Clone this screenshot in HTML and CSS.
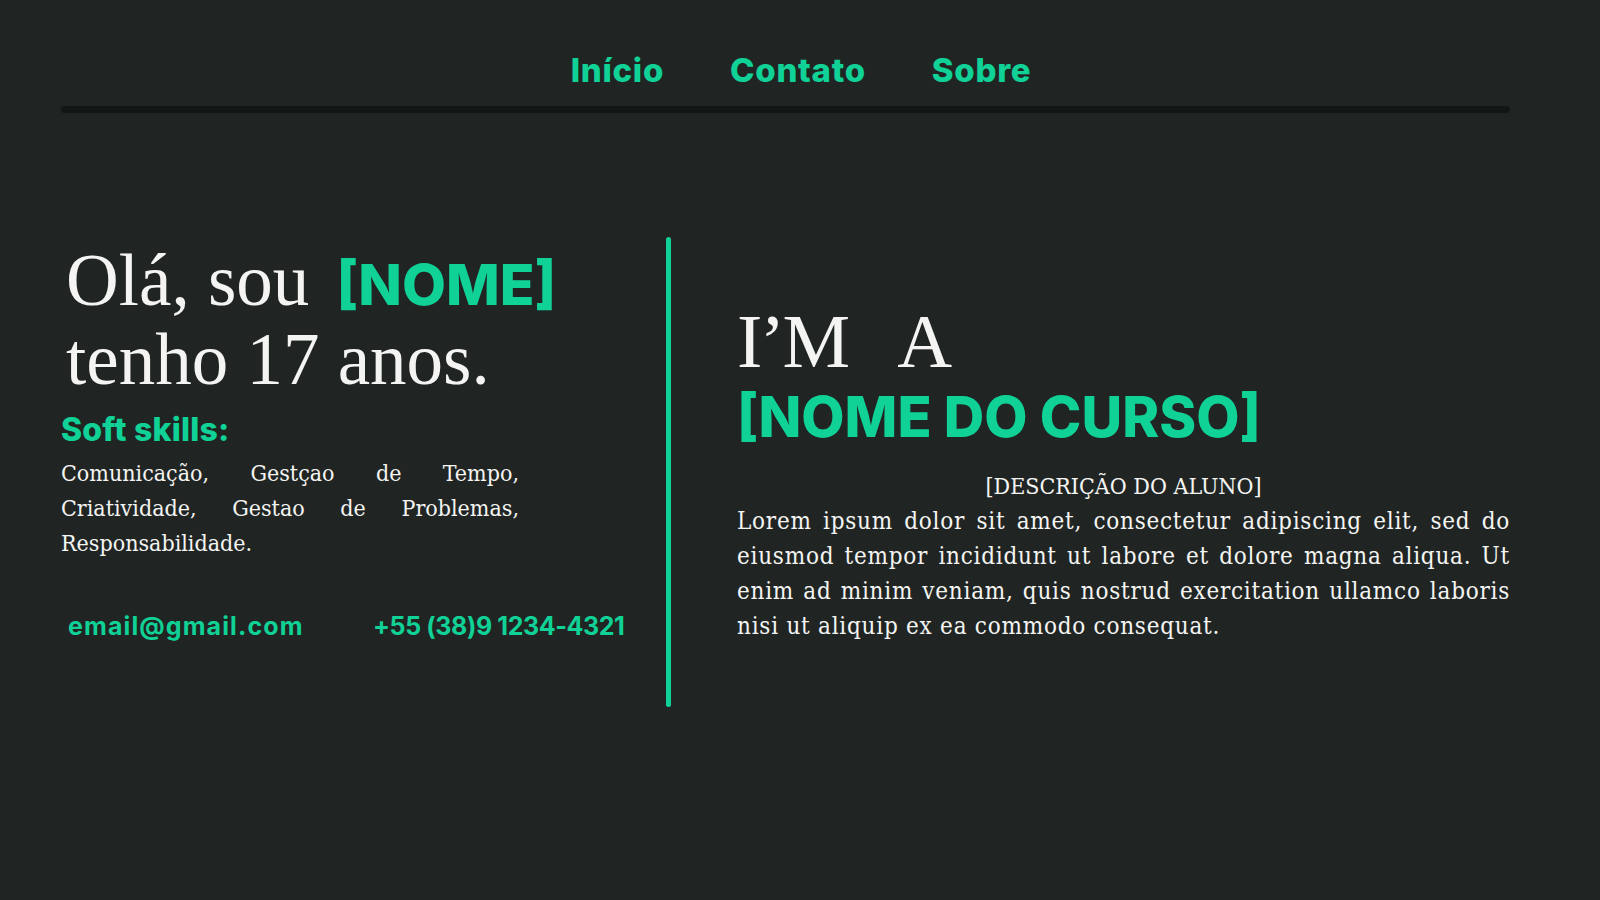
FILE: index.html
```html
<!DOCTYPE html>
<html lang="pt-BR">
<head>
<meta charset="utf-8">
<title>Portfólio</title>
<link rel="stylesheet" href="styles.css">
</head>
<body>
<header class="top">
  <nav class="nav">
    <a class="nav-link" href="#">Início</a>
    <a class="nav-link" href="#">Contato</a>
    <a class="nav-link" href="#">Sobre</a>
  </nav>
  <div class="rule"></div>
</header>
<main class="hero">
  <section class="intro">
    <h1 class="greet">Olá, sou <span class="accent name">[NOME]</span><br>tenho 17 anos.</h1>
    <h2 class="skills-title">Soft skills:</h2>
    <p class="skills">Comunicação, Gestçao de Tempo, Criatividade, Gestao de Problemas, Responsabilidade.</p>
    <div class="contacts">
      <span class="contact email">email@gmail.com</span>
      <span class="contact phone">+55 (38)9 1234-4321</span>
    </div>
  </section>
  <div class="divider"></div>
  <section class="course">
    <h2 class="im">I’M&nbsp;&nbsp;&nbsp;A</h2>
    <h2 class="course-name">[NOME DO CURSO]</h2>
    <h3 class="desc-title">[DESCRIÇÃO DO ALUNO]</h3>
    <p class="desc">Lorem ipsum dolor sit amet, consectetur adipiscing elit, sed do eiusmod tempor incididunt ut labore et dolore magna aliqua. Ut enim ad minim veniam, quis nostrud exercitation ullamco laboris nisi ut aliquip ex ea commodo consequat.</p>
  </section>
</main>
</body>
</html>
```
FILE: styles.css
```css
* { box-sizing: border-box; }
html, body { margin: 0; padding: 0; }
body {
  background: #202524;
  color: #f4f4f2;
  width: 1600px;
  height: 900px;
  overflow: hidden;
  font-family: "Liberation Serif", serif;
}
.top {
  padding-top: 46px;
}
.nav {
  display: flex;
  justify-content: center;
  gap: 66px;
  height: 48px;
  align-items: center;
  padding-left: 2px;
}
.nav-link {
  font-family: Inter, "Noto Sans", sans-serif;
  font-weight: 800;
  font-size: 33px;
  color: #10d196;
  text-decoration: none;
  letter-spacing: 0.7px;
}
.rule {
  margin: 12px 90px 0 61px;
  height: 7px;
  border-radius: 4px;
  background: #121615;
}
.hero {
  display: flex;
  margin: 124px 90px 0 61px;
  height: 470px;
}
.intro {
  width: 605px;
  padding-top: 4px;
}
.greet {
  margin: 0;
  font-weight: 400;
  font-size: 73px;
  line-height: 79px;
  padding-left: 5px;
}
.accent {
  font-family: Inter, "Noto Sans", sans-serif;
  font-weight: 800;
  color: #10d196;
}
.name {
  font-size: 57px;
  line-height: 0;
  margin-left: 9px;
}
.skills-title {
  margin: 9px 0 0 0;
  font-family: Inter, "Noto Sans", sans-serif;
  font-weight: 800;
  font-size: 32px;
  line-height: 44px;
  letter-spacing: 0.2px;
  color: #10d196;
}
.skills {
  margin: 4px 0 0 0;
  width: 458px;
  font-family: "DejaVu Serif", serif;
  font-stretch: semi-condensed;
  font-size: 23px;
  line-height: 35px;
  text-align: justify;
}
.contacts {
  display: grid;
  grid-template-columns: 305px auto;
  margin-top: 50px;
  padding-left: 7px;
}
.contact {
  font-family: Inter, "Noto Sans", sans-serif;
  font-weight: 700;
  font-size: 25px;
  color: #10d196;
}
.email { letter-spacing: 1.1px; }
.phone { letter-spacing: -0.4px; }
.divider {
  width: 5px;
  border-radius: 3px;
  background: #10d196;
}
.course {
  flex: 1;
  margin-left: 66px;
  padding-top: 64px;
  display: flex;
  flex-direction: column;
}
.im {
  margin: 0;
  font-weight: 400;
  font-size: 76px;
  line-height: 80px;
  letter-spacing: -2.5px;
}
.course-name {
  margin: 4px 0 0 0;
  font-family: Inter, "Noto Sans", sans-serif;
  font-weight: 800;
  font-size: 56px;
  line-height: 64px;
  color: #10d196;
}
.desc-title {
  margin: 20px 0 0 0;
  text-align: center;
  font-family: "DejaVu Serif", serif;
  font-stretch: semi-condensed;
  font-weight: 400;
  font-size: 23px;
  line-height: 35px;
}
.desc {
  margin: 0;
  font-family: "DejaVu Serif", serif;
  font-stretch: semi-condensed;
  font-size: 24px;
  line-height: 35px;
  letter-spacing: 0.75px;
  text-align: justify;
}
```
